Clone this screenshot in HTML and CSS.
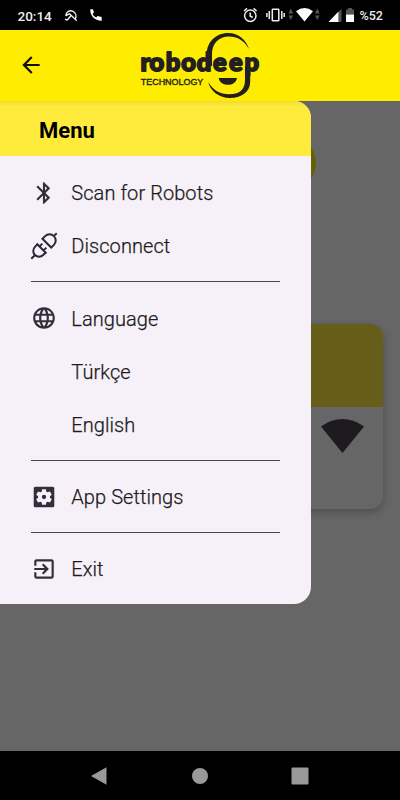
FILE: index.html
```html
<!DOCTYPE html>
<html lang="en">
<head>
<meta charset="utf-8">
<title>Robodeep Menu</title>
<link rel="stylesheet" href="styles.css">
</head>
<body>
<div class="phone">
  <header class="status">
    <span class="clock">20:14</span>
    <svg class="status-left" viewBox="60 0 50 30" aria-hidden="true">
      <g fill="none" stroke="#eee" stroke-width="1.4" stroke-linecap="round" stroke-linejoin="round">
        <path d="M65.800 15.500C66 11.500 70 9.800 73 11.300C75.800 12.700 76.500 16 75.500 18.500M65.800 15.500L69.500 13.800L76.300 20.300M71.200 15.500L68 19.300Q66.800 20.800 65.600 19.300"/>
      </g>
      <path fill="#fff" d="M90.300 9.300h2.700l.9 3.200-1.400 1.400q1.200 2.400 3.600 3.600l1.400-1.400 4.200.9v3.700C95 20.900 90 16 90.300 9.300Z"/>
    </svg>
    <svg class="status-right" viewBox="240 0 115 30" aria-hidden="true">
      <g fill="none" stroke="#eee" stroke-width="1.500">
        <circle cx="250.300" cy="15.700" r="5.700"/>
        <path d="M250.200 12.500v3.500l2.500 1.500M244 11l3-2.600M253.600 8.400l3 2.600"/>
        <rect x="272.300" y="9.200" width="6.500" height="11.600" rx=".6"/>
        <path d="M269.300 11v8M281.800 11v8M266.900 13v4M284.200 13v4"/>
      </g>
      <g fill="#555"><path d="M288.500 13.500l2.300-5 2.300 5ZM288.500 15.500l2.300 4.500 2.300-4.500ZM315 13.500l2.300-5 2.300 5ZM315 15.500l2.300 4.500 2.300-4.500Z"/></g>
      <path fill="#fff" d="M296 11.300Q304.500 4.500 313 11.300L304.500 21.500Z"/>
      <path fill="#555" d="M341.500 9v13h-3V12Z"/>
      <path fill="#fff" d="M328.500 22L338.500 11.500V22Z"/>
      <path fill="#555" d="M346 9.500h2V8h4v1.500h2V14.500h-8Z"/>
      <path fill="#fff" d="M346 14.500h8V22h-8Z"/>
    </svg>
    <span class="battery">%52</span>
  </header>

  <div class="appbar">
    <svg class="back" viewBox="0 0 24 24" aria-hidden="true"><path d="M20 11H7.830l5.590-5.590L12 4l-8 8 8 8 1.410-1.410L7.830 13H20z"/></svg>
    <svg class="logo" viewBox="130 30 140 71" role="img" aria-label="robodeep technology">
      <path d="M206.800 66V54C206.800 42 216 33 228 33C239 33 246 40 249 49C244 40 237 36.400 229 36.400C219 36.400 212 43 212 54V66Z"/>
      <path d="M250.200 66V82C250.200 92 241 98 230 98C219 98 210.500 91 208 82C213 90 220 94.300 229 94.300C239 94.300 245 90 245 80V66Z"/>
      <path d="M218.700 78H237C236 83 232 84.800 228 84.800S219.500 83 218.700 78Z"/>
      <text class="brand" y="71.100" x="140.500 149.500 165.700 181.200 196.800 213 229 244.500">robodeep</text>
      <text class="tagline" x="140.800" y="84.800" textLength="62.500" lengthAdjust="spacingAndGlyphs">TECHNOLOGY</text>
    </svg>
  </div>

  <main class="screen">
    <div class="round-button"></div>
    <div class="card">
      <div class="card-top"></div>
      <div class="card-body"><svg class="signal" viewBox="0 0 43 34" aria-hidden="true"><path d="M0 7.500Q21.500-7.300 43 7.500L21.500 34Z"/></svg></div>
    </div>
    <nav class="drawer">
      <h1 class="drawer-title">Menu</h1>
      <ul class="menu">
        <li class="item"><svg class="icon" viewBox="0 0 24 24"><path d="M17.710 7.710L12 2h-1v7.590L6.410 5 5 6.410 10.590 12 5 17.590 6.410 19 11 14.410V22h1l5.710-5.710-4.300-4.290 4.300-4.290zM13 5.830l1.880 1.880L13 9.590V5.830zm1.880 10.460L13 18.170v-3.760l1.880 1.880z"/></svg><span>Scan for Robots</span></li>
        <li class="item"><svg class="icon" viewBox="0 0 26 26"><g class="lines" transform="rotate(45 13 13)"><path d="M13-5V-1M6.800 9H19.200V5.200a6.200 6.200 0 0 0-12.400 0ZM6 16.500H20M7.200 16.500V20a5.800 5.800 0 0 0 11.600 0V16.500M13 26v5M10.200 12.500v4M15.800 12.500v4"/></g></svg><span>Disconnect</span></li>
        <li class="divider"></li>
        <li class="item"><svg class="icon" viewBox="0 0 24 24"><path d="M11.990 2C6.470 2 2 6.480 2 12s4.470 10 9.990 10C17.520 22 22 17.520 22 12S17.520 2 11.990 2zm6.930 6h-2.950c-.32-1.250-.78-2.450-1.380-3.560 1.840.63 3.370 1.910 4.330 3.560zM12 4.040c.83 1.200 1.480 2.530 1.910 3.960h-3.820c.43-1.430 1.080-2.760 1.910-3.960zM4.260 14C4.100 13.360 4 12.690 4 12s.1-1.360.26-2h3.380c-.08.66-.14 1.320-.14 2s.06 1.340.14 2H4.260zm.82 2h2.950c.32 1.250.78 2.450 1.380 3.560-1.840-.63-3.370-1.900-4.330-3.560zm2.950-8H5.080c.96-1.660 2.490-2.930 4.330-3.560C8.810 5.550 8.350 6.750 8.030 8zM12 19.960c-.83-1.200-1.480-2.530-1.910-3.960h3.820c-.43 1.430-1.080 2.760-1.910 3.960zM14.340 14H9.660c-.09-.66-.16-1.320-.16-2s.07-1.350.16-2h4.680c.09.65.16 1.320.16 2s-.07 1.340-.16 2zm.25 5.560c.6-1.110 1.060-2.310 1.380-3.560h2.950c-.96 1.650-2.490 2.930-4.330 3.560zM16.360 14c.08-.66.14-1.320.14-2s-.06-1.340-.14-2h3.380c.16.640.26 1.310.26 2s-.1 1.360-.26 2h-3.380z"/></svg><span>Language</span></li>
        <li class="item sub"><span>Türkçe</span></li>
        <li class="item sub"><span>English</span></li>
        <li class="divider"></li>
        <li class="item"><svg class="icon" viewBox="0 0 24 24"><path fill-rule="evenodd" d="M4 2.500H20a1.500 1.500 0 0 1 1.500 1.500V20a1.500 1.500 0 0 1-1.500 1.500H4a1.500 1.500 0 0 1-1.500-1.500V4a1.500 1.500 0 0 1 1.500-1.500Z M10.300 4.800H13.700L14.200 7.100L15.300 7.700L17.500 7L19.200 9.900L17.500 11.400V12.600L19.200 14.100L17.500 17L15.300 16.300L14.200 16.900L13.700 19.200H10.300L9.800 16.900L8.700 16.300L6.500 17L4.800 14.100L6.500 12.600V11.400L4.800 9.900L6.500 7L8.700 7.700L9.800 7.100Z M12 10a2 2 0 1 0 0 4a2 2 0 1 0 0-4Z"/></svg><span>App Settings</span></li>
        <li class="divider"></li>
        <li class="item"><svg class="icon" viewBox="0 0 24 24"><path d="M10.090 15.590L11.500 17l5-5-5-5-1.410 1.410L12.670 11H3v2h9.670l-2.580 2.590zM19 3H5c-1.110 0-2 .9-2 2v4h2V5h14v14H5v-4H3v4c0 1.100.89 2 2 2h14c1.100 0 2-.9 2-2V5c0-1.100-.9-2-2-2z"/></svg><span>Exit</span></li>
      </ul>
    </nav>
  </main>

  <footer class="navbar">
    <svg viewBox="0 0 20 20"><path d="M1 10L16.500 1.200v17.600Z"/></svg>
    <svg viewBox="0 0 20 20"><circle cx="10" cy="10" r="8"/></svg>
    <svg viewBox="0 0 20 20"><rect x="1.500" y="1.500" width="17" height="17" rx="1"/></svg>
  </footer>
</div>
</body>
</html>
```

FILE: styles.css
```css
* { box-sizing: border-box; }
body { margin: 0; font-family: Roboto, "Liberation Sans", sans-serif; }
.phone { width: 400px; height: 800px; display: flex; flex-direction: column; overflow: hidden; background: #000; }

.status { height: 30px; display: flex; align-items: center; color: #eee; background: #000; font-weight: 500; }
.clock { width: 42px; margin-left: 17.500px; font-size: 13.500px; line-height: 30px; padding-top: 1px; white-space: nowrap; }
.status-left { width: 50px; height: 30px; margin-left: .5px; }
.status-right { width: 115px; height: 30px; margin-left: 130px; }
.battery { margin-left: 4.500px; font-size: 12.500px; }

.appbar { height: 71px; flex: none; display: flex; align-items: center; background: #ffed00; }
.back { width: 26px; height: 26px; margin: -1px 0 0 17.500px; fill: #111; }
.logo { width: 140px; height: 71px; margin-left: 86.500px; fill: #231f20; }
.brand { font: 900 25.500px Lato, sans-serif; stroke: #231f20; stroke-width: 1.8px; stroke-linejoin: round; }
.tagline { font: 400 8.200px "Liberation Sans", sans-serif; stroke: #231f20; stroke-width: .35px; }

.screen { position: relative; height: 650px; flex: none; background: #666; }
.round-button { position: absolute; left: 262px; top: 35px; width: 54px; height: 54px; border-radius: 50%; background: #665f00; }
.card { position: absolute; left: 17px; top: 223px; width: 366px; height: 185px; border-radius: 13px; overflow: hidden; background: #666; box-shadow: 0 3px 8px rgba(0, 0, 0, .25); }
.card-top { height: 83px; background: #665e18; }
.card-body { display: flex; justify-content: flex-end; padding: 12px 19px 0 0; }
.signal { width: 43px; height: 34px; fill: #1d1b20; }

.drawer { position: relative; width: 311px; height: 503.300px; border-radius: 0 17px 17px 0; overflow: hidden; background: #f6f1f9; }
.drawer-title { height: 55.400px; margin: 0; padding-left: 39px; background: linear-gradient(#eedb36, #ffeb3b 5px); color: #000; font-size: 22px; font-weight: 700; line-height: 59px; }
.menu { list-style: none; margin: 0; padding: 9.600px 31px 0; }
.item { height: 53.300px; display: flex; align-items: center; gap: 14.300px; color: #1d1b20; font-size: 20px; font-weight: 300; letter-spacing: .07px; }
.item span { white-space: nowrap; padding-top: 1px; -webkit-text-stroke: .25px #1d1b20; }
.sub { padding-left: 40.300px; }
.icon { width: 26px; height: 26px; flex: none; overflow: visible; fill: #322f3b; }
.lines { fill: none; stroke: #2b2836; stroke-width: 2; }
.divider { height: 1px; margin: 8.500px 0 9.300px; background: #49454f; }

.navbar { height: 49px; display: flex; justify-content: space-between; align-items: center; padding: 0 90px; background: #000; }
.navbar svg { width: 20px; height: 20px; fill: #999; }
```
